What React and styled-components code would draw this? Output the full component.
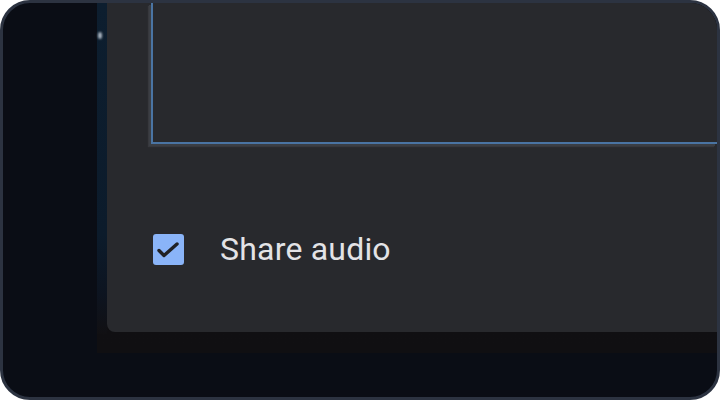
import React from "react";
import styled, { createGlobalStyle } from "styled-components";

const Global = createGlobalStyle`
  html, body { margin: 0; padding: 0; background: #ffffff; }
  body { font-family: Roboto, "Noto Sans", sans-serif; }
`;

const Frame = styled.div`
  box-sizing: border-box;
  width: 720px;
  height: 400px;
  border: 3px solid #2c3341;
  border-radius: 30px;
  background: #0a0d15;
  overflow: hidden;
  display: flex;
  flex-direction: row;
`;

const Gutter = styled.div`
  width: 94px;
  flex: none;
`;

const Backdrop = styled.div`
  flex: 1;
  height: 350px;
  display: flex;
  flex-direction: row;
  align-items: flex-start;
  background: linear-gradient(180deg, #111013 0%, #100f12 100%);
`;

const Strip = styled.div`
  width: 10px;
  height: 331px;
  flex: none;
  box-sizing: border-box;
  padding: 29px 0 0 1px;
  background: linear-gradient(180deg, #0d1e2f 0%, #0c1b2b 70%, #0d1420 88%, #111013 100%);
`;

const Glint = styled.div`
  width: 4px;
  height: 7px;
  border-radius: 50%;
  background: #aeb8c3;
  filter: blur(0.8px);
`;

const Dialog = styled.div`
  flex: 1;
  height: 329px;
  background: #28292d;
  border-bottom-left-radius: 8px;
  display: flex;
  flex-direction: column;
  box-sizing: border-box;
  padding-left: 44px;
`;

const Preview = styled.div`
  height: 141px;
  box-sizing: border-box;
  border-left: 2px solid #4a74a3;
  border-bottom: 2px solid #4a74a3;
  background: #28292d;
  box-shadow: -2px 2px 0 0 #3b3e44, -3px 3px 1px 0 rgba(70, 72, 78, 0.5);
`;

const OptionRow = styled.label`
  display: flex;
  align-items: center;
  margin-top: 90px;
  margin-left: 2px;
  gap: 36px;
  cursor: pointer;
`;

const Box = styled.span`
  width: 31px;
  height: 31px;
  flex: none;
  border-radius: 3px;
  background: #8ab4f8;
  display: flex;
  align-items: center;
  justify-content: center;
`;

const Label = styled.span`
  font-family: Roboto, "Noto Sans", sans-serif;
  font-size: 32px;
  line-height: 31px;
  color: #e3e3e6;
  letter-spacing: 0.2px;
`;

export default function App() {
  return (
    <>
      <Global />
      <Frame>
        <Gutter />
        <Backdrop>
          <Strip>
            <Glint />
          </Strip>
          <Dialog>
            <Preview />
            <OptionRow>
              <Box>
                <svg width="31" height="31" viewBox="0 0 31 31">
                  <polyline
                    points="6,16.5 11,21.5 24,10"
                    fill="none"
                    stroke="#202124"
                    strokeWidth="3.4"
                    strokeLinecap="round"
                    strokeLinejoin="round"
                  />
                </svg>
              </Box>
              <Label>Share audio</Label>
            </OptionRow>
          </Dialog>
        </Backdrop>
      </Frame>
    </>
  );
}
